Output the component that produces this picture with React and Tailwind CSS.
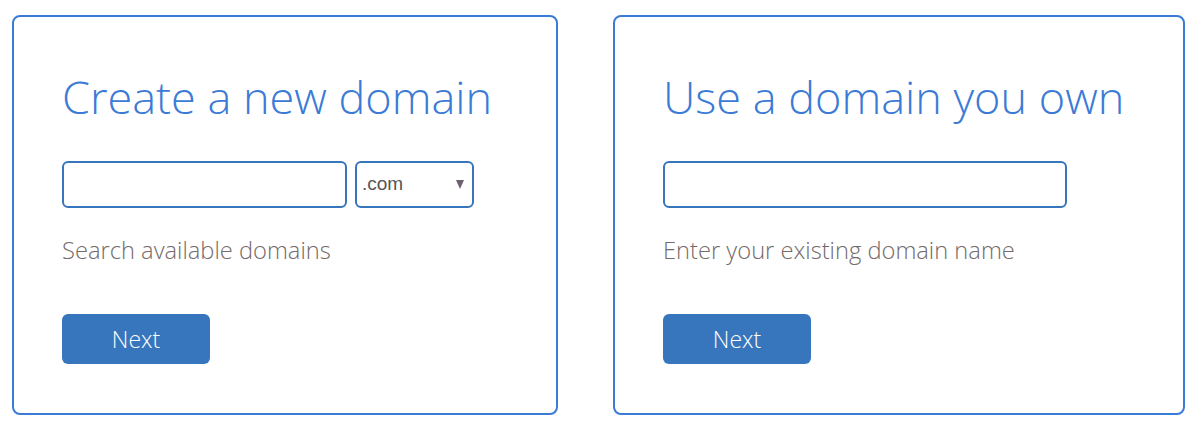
import React from "react";

const Card = ({ title, children, hint, width }) => (
  <div
    className={`${width} h-[400px] border-2 border-[#3b7bd6] rounded-[8px] bg-white pl-[48px] pt-[52px]`}
  >
    <h2 className="text-[45px] leading-[56px] font-light text-[#3b7bd6]">{title}</h2>
    <div className="mt-[36px] flex gap-[8px]">{children}</div>
    <p className="mt-[27px] text-[23.7px] leading-[30px] font-light text-[#736a6a]">{hint}</p>
    <button className="mt-[49px] w-[148px] h-[50px] rounded-[6px] bg-[#3776bc] text-white text-[23px] font-light">
      Next
    </button>
  </div>
);

export default function App() {
  return (
    <div
      className="w-[1196px] h-[430px] bg-white flex gap-[55px] pl-[12px] pt-[15px]"
      style={{ fontFamily: '"Open Sans", sans-serif' }}
    >
      <Card title="Create a new domain" hint="Search available domains" width="w-[546px]">
        <input className="w-[285px] h-[47px] border-2 border-[#3775bd] rounded-[6px] outline-none px-2" />
        <div className="relative w-[119px] h-[47px] border-2 border-[#3775bd] rounded-[6px] flex items-center pl-[5px]">
          <span className="text-[19px] text-[#555] font-['Liberation_Sans',sans-serif]">.com</span>
          <span className="absolute right-[8px] top-[17px] w-0 h-0 border-l-[4px] border-r-[4px] border-t-[9px] border-l-transparent border-r-transparent border-t-[#6e6070]" />
        </div>
      </Card>
      <Card title="Use a domain you own" hint="Enter your existing domain name" width="w-[572px]">
        <input className="w-[404px] h-[47px] border-2 border-[#3775bd] rounded-[6px] outline-none px-2" />
      </Card>
    </div>
  );
}
